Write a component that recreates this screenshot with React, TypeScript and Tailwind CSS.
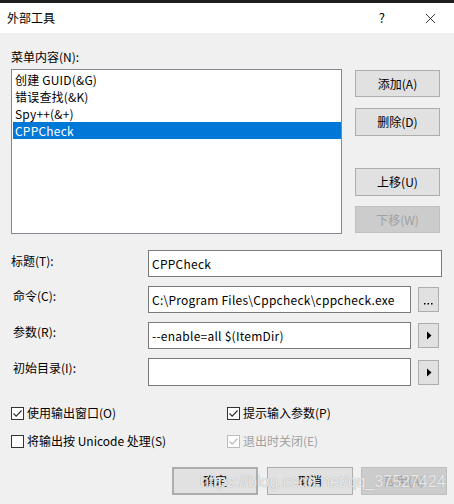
import { X } from 'lucide-react'

const font = { fontFamily: '"Noto Sans CJK SC", "Noto Sans", sans-serif' }

function Btn({ label, disabled, cls = '' }: { label: string; disabled?: boolean; cls?: string }) {
  return (
    <div
      className={`flex items-center justify-center text-[12px] border ${
        disabled ? 'bg-[#cccccc] border-[#bfbfbf] text-[#a0a0a0]' : 'bg-[#e1e1e1] border-[#adadad] text-black'
      } ${cls}`}
    >
      {label}
    </div>
  )
}

function Arrow() {
  return (
    <div className="w-[21px] h-[25px] bg-[#e1e1e1] border border-[#adadad] flex items-center justify-center">
      <svg width="6" height="9" viewBox="0 0 6 9">
        <path d="M1 0.5 L5.5 4.5 L1 8.5 Z" fill="#000" />
      </svg>
    </div>
  )
}

function Check({ checked, disabled, label }: { checked: boolean; disabled?: boolean; label: string }) {
  const c = disabled ? '#bcbcbc' : '#333333'
  return (
    <div className={`flex items-center h-[16px] text-[12px] ${disabled ? 'text-[#a0a0a0]' : 'text-black'}`}>
      <div className="w-[13px] h-[13px] border bg-white flex items-center justify-center" style={{ borderColor: c }}>
        {checked && (
          <svg width="11" height="11" viewBox="0 0 11 11">
            <polyline points="1.5,5.5 4.2,8.2 9.5,2.5" fill="none" stroke={c} strokeWidth="1.2" />
          </svg>
        )}
      </div>
      <span className="ml-[3px]">{label}</span>
    </div>
  )
}

export default function App() {
  const items = ['创建 GUID(&G)', '错误查找(&K)', 'Spy++(&+)', 'CPPCheck']

  return (
    <div className="relative w-[454px] h-[504px] bg-[#f0f0f0] overflow-hidden text-black" style={font}>
      {/* title bar */}
      <div className="h-[3px] bg-[#1e1e1e]" />
      <div className="h-[30px] bg-white flex items-center text-[12px]">
        <span className="ml-[7px]">外部工具</span>
        <span className="ml-auto mr-[37px] text-[13px]">?</span>
        <X size={17} strokeWidth={1.1} className="mr-[15px]" />
      </div>

      <div className="pt-[16px] pl-[11px]">
        <div className="h-[16px] flex items-center text-[12px]">菜单内容(N):</div>

        <div className="flex mt-[4px]">
          {/* list */}
          <div className="w-[331px] h-[165px] border border-[#828790] bg-white pt-[1px] pl-[1px] text-[12px] tracking-[0.2px]">
            {items.map((t, i) => (
              <div
                key={t}
                className={`h-[17px] flex items-center pl-[2px] ${i === 3 ? 'bg-[#0078d7] text-white' : ''}`}
              >
                {t}
              </div>
            ))}
          </div>

          <div className="ml-[13px] w-[85px] flex flex-col pt-[1px]">
            <Btn label="添加(A)" cls="h-[27px]" />
            <Btn label="删除(D)" cls="h-[28px] mt-[11px]" />
            <Btn label="上移(U)" cls="h-[28px] mt-[32px]" />
            <Btn label="下移(W)" disabled cls="h-[27px] mt-[10px]" />
          </div>
        </div>

        {/* form */}
        <div className="mt-[16px] flex flex-col gap-[9px] text-[12px]">
          <div className="flex h-[27px]">
            <div className="w-[137px] -mt-[6px] flex items-center">标题(T):</div>
            <div className="w-[294px] h-[27px] border border-[#7a7a7a] bg-white flex items-center pl-[3px] tracking-[0.25px]">
              CPPCheck
            </div>
          </div>
          <div className="flex h-[27px] items-center">
            <div className="w-[137px] pl-[2px] -mt-[8px]">命令(C):</div>
            <div className="w-[263px] h-[27px] border border-[#7a7a7a] bg-white flex items-center pl-[3px] whitespace-nowrap overflow-hidden tracking-[0.25px]">
              C:\Program Files\Cppcheck\cppcheck.exe
            </div>
            <div className="ml-[7px] w-[21px] h-[25px] bg-[#e1e1e1] border border-[#adadad] flex items-end justify-center pb-[6px]">
              <svg width="9" height="2" viewBox="0 0 9 2">
                <rect x="0" y="0" width="1.5" height="1.5" fill="#000" />
                <rect x="3.5" y="0" width="1.5" height="1.5" fill="#000" />
                <rect x="7" y="0" width="1.5" height="1.5" fill="#000" />
              </svg>
            </div>
          </div>
          <div className="flex h-[27px] items-center">
            <div className="w-[137px] pl-[2px] -mt-[8px]">参数(R):</div>
            <div className="w-[263px] h-[27px] border border-[#7a7a7a] bg-white flex items-center pl-[3px] tracking-[0.25px]">
              --enable=all $(ItemDir)
            </div>
            <div className="ml-[7px]">
              <Arrow />
            </div>
          </div>
          <div className="flex h-[28px] items-center">
            <div className="w-[137px] pl-[2px] -mt-[9px]">初始目录(I):</div>
            <div className="w-[263px] h-[28px] border border-[#7a7a7a] bg-white" />
            <div className="ml-[7px]">
              <Arrow />
            </div>
          </div>
        </div>

        {/* options */}
        <div className="mt-[19px] grid grid-cols-[216px_1fr] gap-y-[12px]">
          <Check checked label="使用输出窗口(O)" />
          <Check checked label="提示输入参数(P)" />
          <Check checked={false} label="将输出按 Unicode 处理(S)" />
          <Check checked disabled label="退出时关闭(E)" />
        </div>

        {/* footer */}
        <div className="mt-[18px] flex pl-[161px] gap-[9px]">
          <Btn label="确定" cls="w-[86px] h-[28px] border-2 border-[#0078d7]" />
          <Btn label="取消" cls="w-[86px] h-[28px]" />
          <Btn label="应用(A)" disabled cls="w-[86px] h-[28px] ml-[-1px]" />
        </div>
      </div>

      {/* watermark */}
      <div
        className="absolute left-[200px] top-[470px] text-[16px] text-white/80 whitespace-nowrap"
        style={{ fontFamily: '"Liberation Sans", Arial, sans-serif', textShadow: '0 0 1px #8a8a8a' }}
      >
        https://blog.csdn.net/qq_37527424
      </div>
    </div>
  )
}
